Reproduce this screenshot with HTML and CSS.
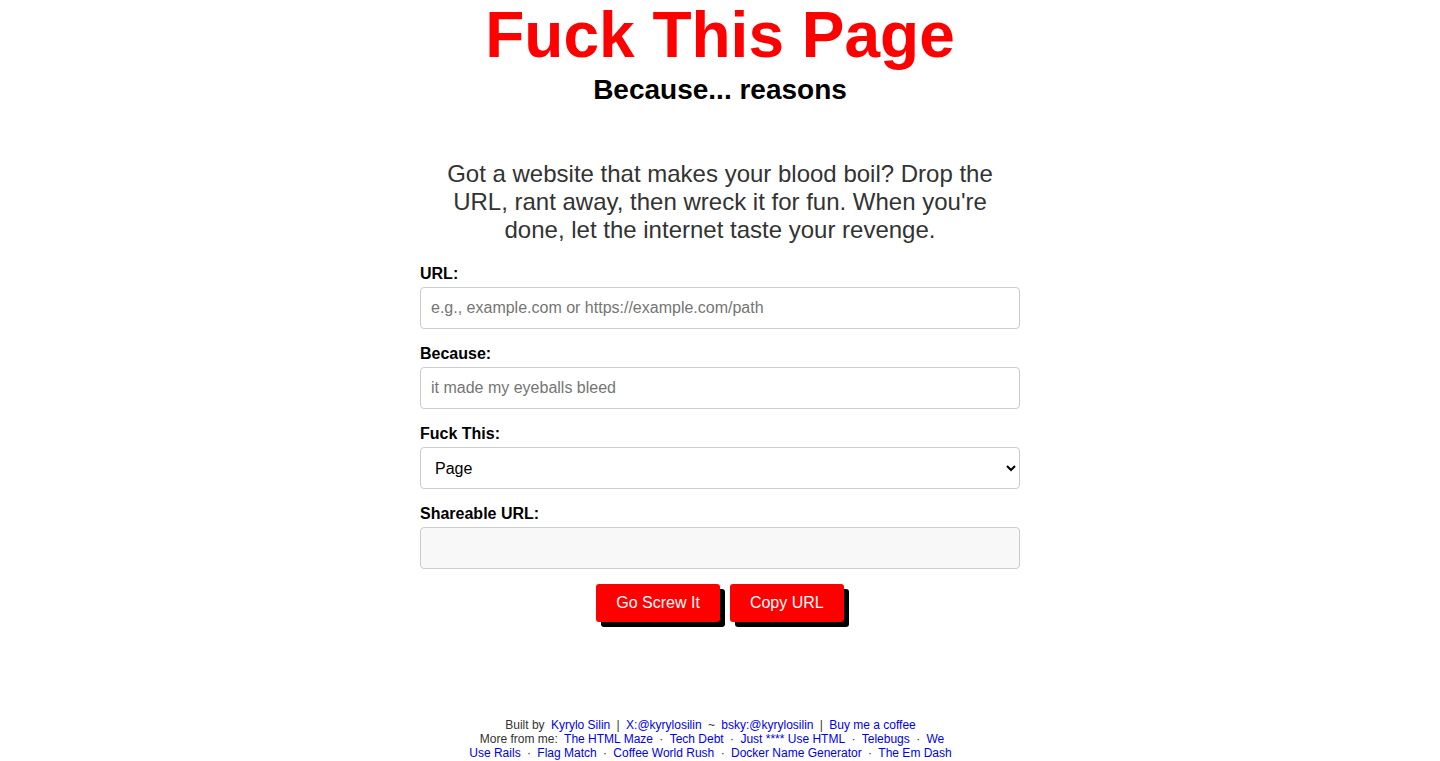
FILE: index.html
```html
<!DOCTYPE html>
<html lang="en">
<head>
<meta charset="utf-8">
<title>Fuck This Page</title>
<link rel="stylesheet" href="styles.css">
</head>
<body>
<main class="page">
  <header class="masthead">
    <h1 class="title">Fuck This Page</h1>
    <h2 class="subtitle">Because... reasons</h2>
  </header>
  <p class="intro">Got a website that makes your blood boil? Drop the URL, rant away, then wreck it for fun. When you're done, let the internet taste your revenge.</p>
  <form class="form">
    <div class="field">
      <label class="label" for="url">URL:</label>
      <input class="input" id="url" type="text" placeholder="e.g., example.com or https://example.com/path">
    </div>
    <div class="field">
      <label class="label" for="because">Because:</label>
      <input class="input" id="because" type="text" placeholder="it made my eyeballs bleed">
    </div>
    <div class="field">
      <label class="label" for="target">Fuck This:</label>
      <select class="input select" id="target">
        <option>Page</option>
        <option>Site</option>
      </select>
    </div>
    <div class="field field-last">
      <label class="label" for="share">Shareable URL:</label>
      <input class="input readonly" id="share" type="text" readonly>
    </div>
    <div class="actions">
      <button type="button" class="btn">Go Screw It</button>
      <button type="button" class="btn">Copy URL</button>
    </div>
  </form>
</main>
<footer class="footer">
  <div class="footer-inner">
    Built by <a href="#">Kyrylo Silin</a> | <a href="#">X:@kyrylosilin</a> ~ <a href="#">bsky:@kyrylosilin</a> | <a href="#">Buy me a coffee</a><br>
    More from me: <a href="#">The HTML Maze</a> · <a href="#">Tech Debt</a> · <a href="#">Just **** Use HTML</a> · <a href="#">Telebugs</a> · <a href="#">We Use Rails</a> · <a href="#">Flag Match</a> · <a href="#">Coffee World Rush</a> · <a href="#">Docker Name Generator</a> · <a href="#">The Em Dash</a>
  </div>
</footer>
</body>
</html>
```

FILE: styles.css
```css
html, body {
  margin: 0;
  padding: 0;
}
body {
  font-family: "Liberation Sans", Arial, sans-serif;
  color: #000;
  background: #fff;
  min-height: 100vh;
  display: flex;
  flex-direction: column;
  box-sizing: border-box;
}
.page {
  display: flex;
  flex-direction: column;
  align-items: center;
}
.masthead {
  text-align: center;
}
.title {
  margin: 0;
  font-size: 64px;
  font-weight: bold;
  color: #ff0000;
  line-height: 70px;
}
.subtitle {
  margin: 4px 0 0;
  font-size: 28px;
  font-weight: bold;
  line-height: 32px;
}
.intro {
  margin: 54px 0 21px;
  max-width: 560px;
  font-size: 24px;
  line-height: 28px;
  color: #333;
  text-align: center;
}
.form {
  width: 600px;
  display: flex;
  flex-direction: column;
}
.field {
  display: flex;
  flex-direction: column;
  margin-bottom: 16px;
}
.field-last {
  margin-bottom: 15px;
}
.label {
  font-weight: bold;
  font-size: 16px;
  line-height: 18px;
  margin-bottom: 4px;
}
.input {
  box-sizing: border-box;
  width: 100%;
  height: 42px;
  padding: 0 10px;
  font-family: "Liberation Sans", Arial, sans-serif;
  font-size: 16px;
  border: 1px solid #ccc;
  border-radius: 4px;
  background: #fff;
  color: #000;
}
.input::placeholder {
  color: #757575;
}
.readonly {
  background: #f8f8f8;
}
.actions {
  display: flex;
  justify-content: center;
  gap: 10px;
}
.btn {
  font-family: "Liberation Sans", Arial, sans-serif;
  font-size: 16px;
  line-height: 18px;
  padding: 10px 20px;
  color: #fff;
  background: #ff0000;
  border: none;
  border-radius: 3px;
  box-shadow: 5px 5px 0 #000;
  cursor: pointer;
}
.footer {
  margin-top: auto;
  display: flex;
  justify-content: center;
  padding: 0 16px 1px 0;
}
.footer-inner {
  max-width: 488px;
  text-align: center;
  font-size: 12px;
  line-height: 14px;
  color: #333;
}
.footer a {
  color: #0000ee;
  text-decoration: none;
  margin: 0 3px;
}
```
